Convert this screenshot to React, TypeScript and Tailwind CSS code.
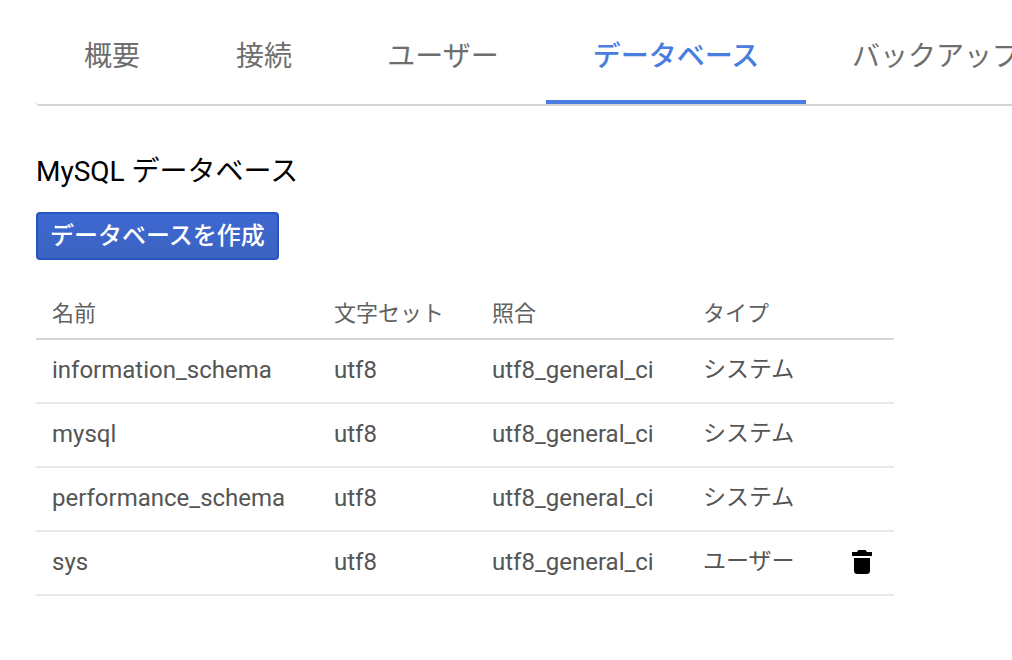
import { clsx } from "clsx";

const tabs = [
  { label: "概要", width: "w-[152px]" },
  { label: "接続", width: "w-[152px]" },
  { label: "ユーザー", width: "w-[206px]" },
  { label: "データベース", width: "w-[260px]", active: true },
  { label: "バックアップ", width: "w-[260px]" },
];

const databases = [
  { name: "information_schema", charset: "utf8", collation: "utf8_general_ci", type: "システム" },
  { name: "mysql", charset: "utf8", collation: "utf8_general_ci", type: "システム" },
  { name: "performance_schema", charset: "utf8", collation: "utf8_general_ci", type: "システム" },
  { name: "sys", charset: "utf8", collation: "utf8_general_ci", type: "ユーザー", removable: true },
];

const TrashIcon = () => (
  <svg viewBox="0 0 20 24" className="h-6 w-5" fill="currentColor" aria-hidden="true">
    <path d="M6.500 0h7L15 2h5v4H0V2h5z" />
    <path d="M2 8h16v12.500a3.500 3.500 0 0 1-3.500 3.500h-9A3.500 3.500 0 0 1 2 20.500z" />
  </svg>
);

const Tabs = () => (
  <nav className="ml-9 flex overflow-hidden rounded-bl-sm border-b-2 border-[#d3d3d3]">
    {tabs.map((tab) => (
      <button
        key={tab.label}
        type="button"
        className={clsx(
          "h-[104px] shrink-0 border-b-4 pt-3.5 text-[28px] whitespace-nowrap",
          tab.width,
          tab.active ? "border-[#4a7de0] font-medium text-[#4a7de0]" : "border-transparent text-[#6e6e6e]"
        )}
      >
        {tab.label}
      </button>
    ))}
  </nav>
);

const DatabaseTable = () => (
  <table className="mt-7 w-full max-w-[858px] table-fixed border-collapse text-left text-[#555]">
    <colgroup>
      <col className="w-[282px]" />
      <col className="w-[158px]" />
      <col className="w-[211px]" />
      <col className="w-[143px]" />
      <col />
    </colgroup>
    <thead>
      <tr className="h-[51px] border-b-2 border-[#d6d6d6] text-[22px] text-[#616161]">
        <th className="pl-4 font-normal">名前</th>
        <th className="pl-4 font-normal">文字セット</th>
        <th className="pl-4 font-normal">照合</th>
        <th className="pl-4 font-normal">タイプ</th>
        <td />
      </tr>
    </thead>
    <tbody>
      {databases.map((db) => (
        <tr key={db.name} className="h-16 border-b-2 border-[#e8e8e8] text-2xl">
          <td className="pb-0.5 pl-4">{db.name}</td>
          <td className="pb-0.5 pl-4">{db.charset}</td>
          <td className="pb-0.5 pl-4">{db.collation}</td>
          <td className="pb-0.5 pl-4 text-[23px]">{db.type}</td>
          <td className="pb-0.5">
            {db.removable && (
              <button type="button" aria-label={`${db.name} を削除`} className="mx-auto block text-black">
                <TrashIcon />
              </button>
            )}
          </td>
        </tr>
      ))}
    </tbody>
  </table>
);

const App = () => {
  return (
    <div className="min-h-screen bg-white font-[Roboto,'Noto_Sans_CJK_JP',sans-serif]">
      <Tabs />
      <main className="px-9 pt-[46px]">
        <h1 className="text-[28px] leading-10 font-normal text-black">MySQL データベース</h1>
        <button
          type="button"
          className="mt-5 h-12 rounded-sm border-2 border-[#2655c0] bg-linear-to-b from-[#3e68d2] to-[#3b63c0] px-3 text-2xl font-medium text-white"
        >
          データベースを作成
        </button>
        <DatabaseTable />
      </main>
    </div>
  );
};

export default App;
